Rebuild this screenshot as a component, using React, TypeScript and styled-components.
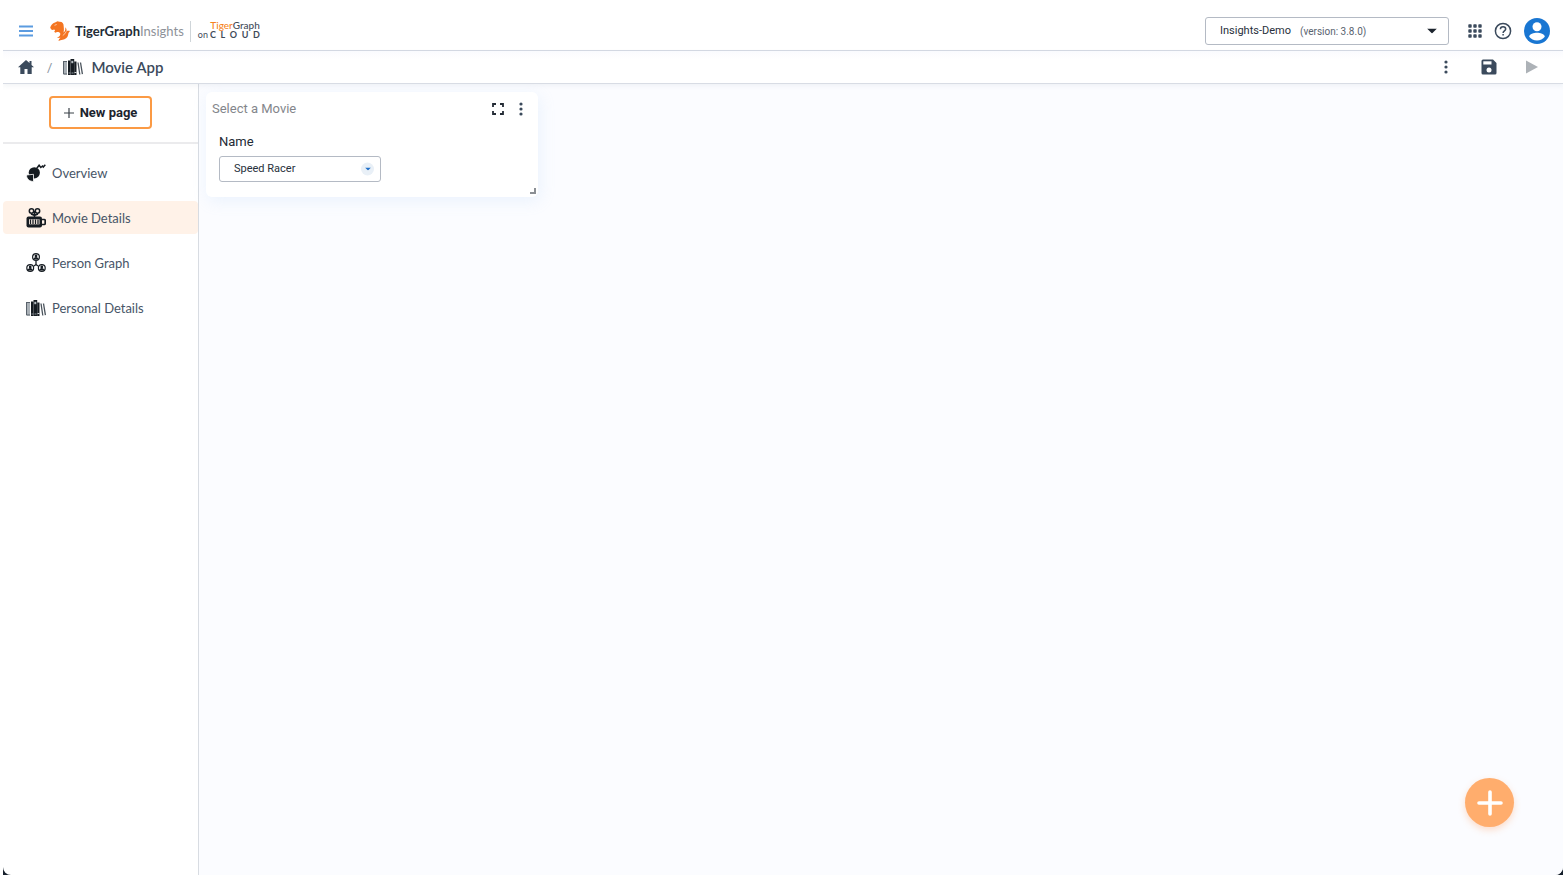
import React from "react";
import styled, { createGlobalStyle } from "styled-components";

const brandFont = `Lato, "Open Sans", sans-serif`;
const uiFont = `Roboto, "Liberation Sans", sans-serif`;

const GlobalStyle = createGlobalStyle`
  *, *::before, *::after { box-sizing: border-box; }
  body { margin: 0; background: #fff; color: #3b4a5c; font-family: ${uiFont}; }
  button, select { font-family: inherit; color: inherit; }
`;

const Frame = styled.div`
  display: flex;
  flex-direction: column;
  height: 100vh;
  padding: 0 3px 11px;
`;

const WindowEdge = styled.div`
  flex: 1;
  display: flex;
  min-height: 0;
  background: linear-gradient(#fff 50%, #16202c 50%);
`;

const Shell = styled.div`
  flex: 1;
  display: flex;
  flex-direction: column;
  min-width: 0;
  overflow: hidden;
  background: #fff;
  border-radius: 0 0 8px 8px;
`;

const TopBar = styled.header`
  display: flex;
  align-items: center;
  height: 51px;
  padding: 12px 8px 0 13px;
  border-bottom: 1px solid #d5dae4;
`;

const CrumbBar = styled.div`
  position: relative;
  z-index: 1;
  display: flex;
  align-items: center;
  height: 33px;
  padding: 0 21px 0 13px;
  background: linear-gradient(#fafbfe, #fff 8px);
  border-bottom: 1px solid #d8dce4;
  box-shadow: 0 2px 5px rgba(90, 110, 140, 0.08);
`;

const Spacer = styled.div`
  flex: 1;
`;

const IconButton = styled.button<{ $size: number }>`
  display: grid;
  place-items: center;
  flex: none;
  width: ${(p) => p.$size}px;
  height: ${(p) => p.$size}px;
  padding: 0;
  border: 0;
  background: none;
  cursor: pointer;

  svg { display: block; }
`;

const Brand = styled.a`
  display: flex;
  align-items: center;
  margin-left: 14px;
  color: #222b36;
  text-decoration: none;
  font-family: ${brandFont};
`;

const ProductName = styled.span`
  margin-left: 5px;
  font-size: 13px;
  line-height: 20px;
  font-weight: 700;
`;

const ProductSuffix = styled.span`
  color: #8e9299;
  font-weight: 400;
`;

const CloudMark = styled.span`
  display: flex;
  flex-direction: column;
  align-items: flex-end;
  width: 70px;
  height: 21px;
  margin-left: 6px;
  border-left: 1px solid #cfd5d9;
  font-size: 10px;
  line-height: 9px;
  font-weight: 500;
  color: #3f4b59;
`;

const Accent = styled.span`
  color: #f58220;
`;

const CloudLine = styled.span`
  display: flex;
  gap: 2px;
  width: 62px;
  font-size: 9px;
  line-height: 9px;
  font-weight: 400;
`;

const CloudLetters = styled.span`
  flex: 1;
  display: flex;
  justify-content: space-between;
  font-weight: 700;
`;

const SelectBox = styled.div<{ $width: number; $height: number }>`
  position: relative;
  display: flex;
  width: ${(p) => p.$width}px;
  height: ${(p) => p.$height}px;
`;

const Select = styled.select`
  width: 100%;
  padding: 0 30px 0 14px;
  appearance: none;
  border: 1px solid #b4bac4;
  border-radius: 3px;
  background: #fff;
  color: #27303b;
  font-size: 11px;
  line-height: 16px;
`;

const Version = styled.span`
  position: absolute;
  left: 95px;
  top: 7px;
  color: #59636f;
  font-size: 10px;
  line-height: 16px;
  pointer-events: none;
`;

const Caret = styled.span<{ $round?: boolean }>`
  position: absolute;
  top: 50%;
  right: ${(p) => (p.$round ? 7 : 11)}px;
  display: grid;
  place-items: center;
  width: 13px;
  height: 13px;
  transform: translateY(-50%);
  border-radius: 50%;
  background: ${(p) => (p.$round ? "#e9f0f7" : "none")};
  pointer-events: none;
`;

const TopActions = styled.div`
  display: flex;
  align-items: center;
  gap: 4px;
  margin-left: 14px;
`;

const Slash = styled.span`
  margin: 0 11px;
  color: #8d97a3;
  font-size: 13px;
`;

const AppTitle = styled.h1`
  margin: 0 0 0 8px;
  color: #3b4a5c;
  font-family: ${brandFont};
  font-size: 15px;
  line-height: 20px;
  font-weight: 600;
`;

const CrumbActions = styled.div`
  display: flex;
  align-items: center;
  gap: 23px;
`;

const Body = styled.div`
  flex: 1;
  display: flex;
  min-height: 0;
`;

const Sidebar = styled.aside`
  flex: none;
  width: 196px;
  border-right: 1px solid #d8dce2;
`;

const SidebarTop = styled.div`
  display: flex;
  justify-content: center;
  padding: 12px 0 13px;
  border-bottom: 2px solid #ebebed;
`;

const NewPage = styled.button`
  display: flex;
  align-items: center;
  justify-content: center;
  gap: 6px;
  width: 103px;
  height: 33px;
  padding: 0;
  border: 2px solid #fb9a44;
  border-radius: 4px;
  background: #fff;
  color: #1c242e;
  font-size: 13px;
  font-weight: 700;
  cursor: pointer;
`;

const NavList = styled.nav`
  display: flex;
  flex-direction: column;
  gap: 12px;
  padding-top: 12px;
`;

const NavLink = styled.a<{ $active?: boolean }>`
  display: flex;
  align-items: center;
  gap: 6px;
  height: 33px;
  padding-left: 23px;
  border-radius: 4px;
  background: ${(p) => (p.$active ? "#fff2e8" : "none")};
  color: #475567;
  font-family: ${brandFont};
  font-size: 13px;
  line-height: 20px;
  text-decoration: none;
`;

const Canvas = styled.main`
  position: relative;
  flex: 1;
  min-width: 0;
  padding: 8px 7px;
  background: #fbfcff;
`;

const Card = styled.section`
  position: relative;
  width: 332px;
  height: 105px;
  padding: 0 6px;
  border-radius: 6px;
  background: #fff;
  box-shadow: 2px 4px 16px rgba(150, 195, 240, 0.16);
`;

const CardHeader = styled.div`
  display: flex;
  align-items: center;
  height: 34px;
`;

const CardTitle = styled.h2`
  flex: 1;
  margin: 0;
  color: #83868b;
  font-size: 13px;
  line-height: 20px;
  font-weight: 400;
`;

const Field = styled.div`
  padding: 6px 7px;
`;

const FieldLabel = styled.label`
  display: block;
  margin-bottom: 4px;
  color: #232b35;
  font-size: 13px;
  line-height: 20px;
`;

const ResizeHandle = styled.span`
  position: absolute;
  right: 2px;
  bottom: 3px;
  width: 6px;
  height: 6px;
  border: solid #8b8f94;
  border-width: 0 2px 2px 0;
`;

const AddButton = styled.button`
  position: absolute;
  right: 49px;
  bottom: 48px;
  display: grid;
  place-items: center;
  width: 49px;
  height: 49px;
  padding: 0;
  border: 0;
  border-radius: 50%;
  background: #ffad6d;
  box-shadow: 0 3px 7px rgba(255, 150, 80, 0.3);
  cursor: pointer;
`;

const BooksIcon = () => (
  <svg width="20" height="18" viewBox="0 0 20 18" fill="none" aria-hidden="true">
    <path d="M.5 3h3.500v13.500H.5z" fill="#a9b0b6" />
    <path d="M.5 3.500h3.500M.5 16h3.500M.5 3v13" stroke="#59626b" />
    <path d="M5 2.500h2.500V17H5z" fill="#161c22" />
    <path d="M7.500 1h3.700v16H7.500z" fill="#161c22" />
    <path d="M8.300 2.800h2v2.400h-2z" fill="#b9c0c5" />
    <path d="M5.500 15h2M8.500 15h2" stroke="#8b939a" />
    <path d="M11.200 3.500h2.300V17h-2.300z" fill="#161c22" />
    <path d="M11.500 14.500h2" stroke="#d5d9dc" />
    <path d="m15 4.500 1.800 12M17.500 4.500l1.900 11.700" stroke="#4a535c" strokeWidth="1.300" />
  </svg>
);

const OverviewIcon = () => (
  <svg width="20" height="18" viewBox="0 0 20 18" fill="none" aria-hidden="true">
    <circle cx="8.300" cy="8.800" r="5.600" fill="#161c22" />
    <path d="M7.500 10.300v7.200C3.500 17.500.5 15 .5 11z" fill="#161c22" stroke="#fff" strokeWidth=".8" />
    <path d="m10.800 4.200 2.300-3 1.700 2.300L16.500 2l.8 1L19.300.8" stroke="#161c22" strokeWidth="1.500" />
  </svg>
);

const CameraIcon = () => (
  <svg width="20" height="20" viewBox="0 0 20 20" fill="none" aria-hidden="true">
    <circle cx="5.500" cy="3" r="2.200" stroke="#161c22" strokeWidth="1.500" />
    <circle cx="11.500" cy="3" r="2.200" stroke="#161c22" strokeWidth="1.500" />
    <path d="M8.500 3v6M5 6l3.500 1.500L12 6" stroke="#161c22" strokeWidth="1.500" />
    <rect x=".5" y="8.500" width="15.500" height="11" rx="2" fill="#161c22" />
    <path d="M3 11.300h10.500v5H3z" fill="#fff2e8" />
    <path d="M4.500 11.500v4.600M7 11.500v4.600M9.500 11.500v4.600M12 11.500v4.600" stroke="#161c22" strokeWidth="1.300" />
    <path d="M16 11.500h2.200q1 0 1 1v3q0 1-1 1H16" stroke="#161c22" strokeWidth="1.700" />
  </svg>
);

const PeopleIcon = () => (
  <svg width="20" height="20" viewBox="0 0 20 20" fill="none" aria-hidden="true">
    <path d="M10 8v3.500L8 13M10 11.500l2 1.500" stroke="#161c22" strokeWidth="1.300" />
    {[[10, 4], [4.2, 15], [15.8, 15]].map(([x, y]) => (
      <g key={x}>
        <circle cx={x} cy={y} r="3.400" fill="#fff" stroke="#161c22" strokeWidth="1.200" />
        <circle cx={x} cy={y - 1} r="1.400" fill="#161c22" />
        <path d={`M${x - 2.6} ${y + 2.6}c0-3.600 5.200-3.600 5.200 0z`} fill="#161c22" />
      </g>
    ))}
  </svg>
);

const TigerLogo = () => (
  <svg width="20" height="20" viewBox="0 0 20 20" aria-hidden="true">
    <path d="M.2 6.800C.8 4 2.500 2 5 1.400L7.500.2 9.200.8c3-.3 4.600 1.700 4.500 4.600.2 2.500.5 4-.3 6.200 1.600-1.200 2.200-3 1.900-5.400 1.200 1.200 1.500 2.600 1.200 4 1.200-.5 2.200-.6 3.500-.1-1.200 1.200-1.700 2.200-1.900 4-.6 3-3 4.200-5.400 4.600-1.700.3-3 .6-4.200 1.300.2-1.600.9-2.500 2-3.300l-3.700.3c2.500-1.200 3.900-2.900 3.400-4.800-.6-1.200-2-1.400-3.400-1.300l-1 .8c-.9-.1-1.400-.5-1.600-1.200l.9-.9-.8-1-2.100.5C1.500 8.600.7 7.900.2 6.800Z" fill="#f47521" />
    <path d="m4.500 4.300 2.200-.8M12.800 14.500c1.600-1 2.800-2.400 3.500-4.200" stroke="#fff" strokeWidth=".6" fill="none" />
  </svg>
);

const MenuIcon = () => (
  <svg width="16" height="12" viewBox="0 0 16 12" aria-hidden="true">
    <path d="M1 1.500h14M1 6h14M1 10.500h14" stroke="#5b9be0" strokeWidth="2" />
  </svg>
);

const HomeIcon = () => (
  <svg width="16" height="14" viewBox="0 0 16 14" fill="#3b4a5c" aria-hidden="true">
    <path d="M8 0 0 7.300h2.300V14h4.200V9h3v5h4.200V7.300H16l-2.500-2.400V1h-2v2.100z" />
  </svg>
);

const AppsIcon = () => (
  <svg width="14" height="14" viewBox="0 0 14 14" fill="#3b4a5c" aria-hidden="true">
    {[0, 5, 10].map((y) => [0, 5, 10].map((x) => (
      <rect key={`${x}-${y}`} x={x + 0.3} y={y + 0.3} width="3.400" height="3.400" rx=".7" />
    )))}
  </svg>
);

const HelpIcon = () => (
  <svg width="24" height="24" viewBox="0 0 24 24" fill="none" stroke="#3b4a5c" strokeWidth="1.500" aria-hidden="true">
    <circle cx="12" cy="12" r="7.600" />
    <path d="M9.400 10.200c0-3.500 5.300-3.300 5.300-.2 0 1.800-2.600 2-2.600 4" />
    <path d="M12.100 15v1.600" />
  </svg>
);

const AvatarIcon = () => (
  <svg width="26" height="26" viewBox="0 0 26 26" aria-hidden="true">
    <circle cx="13" cy="13" r="13" fill="#1976d2" />
    <circle cx="13" cy="8.700" r="4.500" fill="#fff" />
    <path d="M5.200 18.700C5.200 16 10 14.700 13 14.700s7.800 1.300 7.800 4c-1.800 2.300-4.600 3.800-7.800 3.800s-6-1.500-7.800-3.800Z" fill="#fff" />
  </svg>
);

const DotsIcon = () => (
  <svg width="4" height="14" viewBox="0 0 4 14" fill="#3b4a5c" aria-hidden="true">
    <circle cx="2" cy="2" r="1.600" />
    <circle cx="2" cy="7" r="1.600" />
    <circle cx="2" cy="12" r="1.600" />
  </svg>
);

const SaveIcon = () => (
  <svg width="16" height="16" viewBox="0 0 16 16" aria-hidden="true">
    <path d="M2 .5h10L15.500 4v10a1.500 1.500 0 0 1-1.500 1.500H2A1.500 1.500 0 0 1 .5 14V2A1.500 1.500 0 0 1 2 .5Z" fill="#3b4a5c" />
    <path d="M2.300 2.300h8.200v3.200H2.300z" fill="#fff" />
    <circle cx="8" cy="11" r="2.500" fill="#fff" />
  </svg>
);

const PlayIcon = () => (
  <svg width="12" height="14" viewBox="0 0 12 14" aria-hidden="true">
    <path d="M0 .5 12 7 0 13.500z" fill="#adb2b7" />
  </svg>
);

const FullscreenIcon = () => (
  <svg width="12" height="12" viewBox="0 0 12 12" fill="none" stroke="#232b35" strokeWidth="1.800" aria-hidden="true">
    <path d="M1 4V1h3M8 1h3v3M11 8v3H8M4 11H1V8" />
  </svg>
);

const ThinPlus = () => (
  <svg width="10" height="10" viewBox="0 0 10 10" aria-hidden="true">
    <path d="M5 0v10M0 5h10" stroke="#3b4249" strokeWidth="1.200" />
  </svg>
);

const LargePlus = () => (
  <svg width="26" height="26" viewBox="0 0 26 26" aria-hidden="true">
    <path d="M13 2v22M2 13h22" stroke="#fff" strokeWidth="3.600" strokeLinecap="round" />
  </svg>
);

const Triangle = ({ width, color }: { width: number; color: string }) => (
  <svg width={width} height={width / 2} viewBox="0 0 10 5" aria-hidden="true">
    <path d="M0 0h10L5 5z" fill={color} />
  </svg>
);

const pages = [
  { name: "Overview", Icon: OverviewIcon },
  { name: "Movie Details", Icon: CameraIcon, active: true },
  { name: "Person Graph", Icon: PeopleIcon },
  { name: "Personal Details", Icon: BooksIcon },
];

export default function App() {
  return (
    <Frame>
      <GlobalStyle />
      <WindowEdge>
        <Shell>
          <TopBar>
            <IconButton $size={20} aria-label="Menu"><MenuIcon /></IconButton>
            <Brand href="#home">
              <TigerLogo />
              <ProductName>TigerGraph<ProductSuffix>Insights</ProductSuffix></ProductName>
              <CloudMark>
                <span><Accent>Tiger</Accent>Graph</span>
                <CloudLine>
                  on
                  <CloudLetters>
                    {["C", "L", "O", "U", "D"].map((letter) => <span key={letter}>{letter}</span>)}
                  </CloudLetters>
                </CloudLine>
              </CloudMark>
            </Brand>
            <Spacer />
            <SelectBox $width={244} $height={28}>
              <Select aria-label="Cluster" defaultValue="demo">
                <option value="demo">Insights-Demo</option>
              </Select>
              <Version>(version: 3.8.0)</Version>
              <Caret><Triangle width={10} color="#1c242e" /></Caret>
            </SelectBox>
            <TopActions>
              <IconButton $size={24} aria-label="Apps"><AppsIcon /></IconButton>
              <IconButton $size={24} aria-label="Help"><HelpIcon /></IconButton>
              <IconButton $size={36} aria-label="Account"><AvatarIcon /></IconButton>
            </TopActions>
          </TopBar>

          <CrumbBar>
            <IconButton $size={20} aria-label="Home"><HomeIcon /></IconButton>
            <Slash>/</Slash>
            <BooksIcon />
            <AppTitle>Movie App</AppTitle>
            <Spacer />
            <CrumbActions>
              <IconButton $size={20} aria-label="More"><DotsIcon /></IconButton>
              <IconButton $size={20} aria-label="Save"><SaveIcon /></IconButton>
              <IconButton $size={20} aria-label="Run"><PlayIcon /></IconButton>
            </CrumbActions>
          </CrumbBar>

          <Body>
            <Sidebar>
              <SidebarTop>
                <NewPage><ThinPlus />New page</NewPage>
              </SidebarTop>
              <NavList aria-label="Pages">
                {pages.map(({ name, Icon, active }) => (
                  <NavLink key={name} href="#page" $active={active} aria-current={active ? "page" : undefined}>
                    <Icon />
                    {name}
                  </NavLink>
                ))}
              </NavList>
            </Sidebar>

            <Canvas>
              <Card>
                <CardHeader>
                  <CardTitle>Select a Movie</CardTitle>
                  <IconButton $size={23} aria-label="Full screen"><FullscreenIcon /></IconButton>
                  <IconButton $size={23} aria-label="Widget menu"><DotsIcon /></IconButton>
                </CardHeader>
                <Field>
                  <FieldLabel htmlFor="movie">Name</FieldLabel>
                  <SelectBox $width={162} $height={26}>
                    <Select id="movie" defaultValue="speed">
                      <option value="speed">Speed Racer</option>
                    </Select>
                    <Caret $round><Triangle width={6} color="#1f6fc9" /></Caret>
                  </SelectBox>
                </Field>
                <ResizeHandle />
              </Card>
              <AddButton aria-label="Add widget"><LargePlus /></AddButton>
            </Canvas>
          </Body>
        </Shell>
      </WindowEdge>
    </Frame>
  );
}
